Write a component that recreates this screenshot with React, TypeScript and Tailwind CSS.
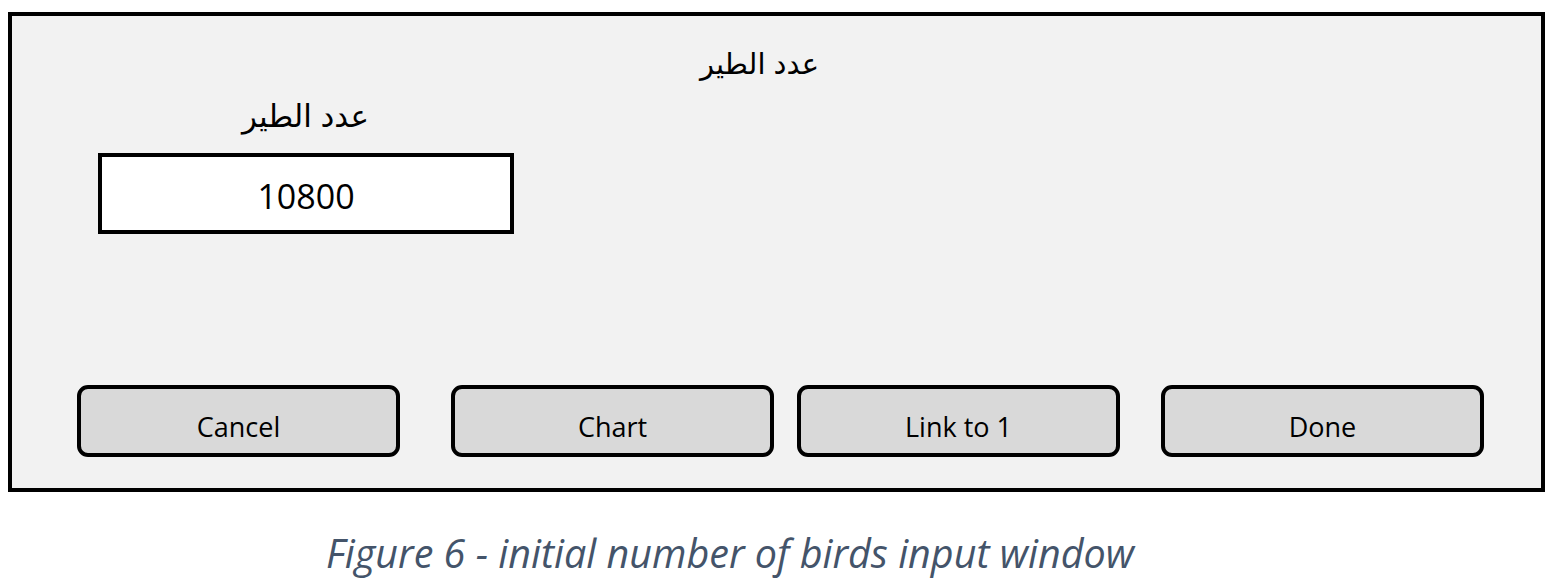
export default function App() {
  const buttons = [
    { label: 'Cancel', ml: 'ml-[65px]' },
    { label: 'Chart', ml: 'ml-[51px]' },
    { label: 'Link to 1', ml: 'ml-[23px]' },
    { label: 'Done', ml: 'ml-[41px]' },
  ];
  return (
    <div className="w-[1554px] h-[580px] overflow-hidden bg-white pt-[12px] pl-[8px]">
      <div className="w-[1537px] h-[480px] border-[4px] border-black bg-[#f2f2f2] flex flex-col">
        <div className="mt-[30px] pr-[34px] text-center text-[29px] leading-[36px] text-black font-['Liberation_Sans','DejaVu_Sans',sans-serif]" dir="rtl">
          عدد الطير
        </div>
        <div className="mt-[17px] w-[415px] ml-[86px] text-center text-[31px] leading-[36px] text-black font-['Liberation_Sans','DejaVu_Sans',sans-serif]" dir="rtl">
          عدد الطير
        </div>
        <div className="mt-[18px] ml-[86px] w-[416px] h-[81px] border-[4px] border-black bg-white flex items-center justify-center pt-[6px] text-[34px] text-black font-['Open_Sans',sans-serif]">
          10800
        </div>
        <div className="mt-[151px] flex">
          {buttons.map((b) => (
            <div
              key={b.label}
              className={`${b.ml} w-[323px] h-[72px] rounded-[11px] border-[4px] border-black bg-[#d9d9d9] flex items-center justify-center pt-[13px] text-[27px] text-black font-['Open_Sans',sans-serif]`}
            >
              {b.label}
            </div>
          ))}
        </div>
      </div>
      <div className="mt-[37px] -ml-[8px] pr-[94px] text-center text-[39.5px] leading-[48px] italic text-[#44546a] font-['Open_Sans',sans-serif]">
        Figure 6 - initial number of birds input window
      </div>
    </div>
  );
}
